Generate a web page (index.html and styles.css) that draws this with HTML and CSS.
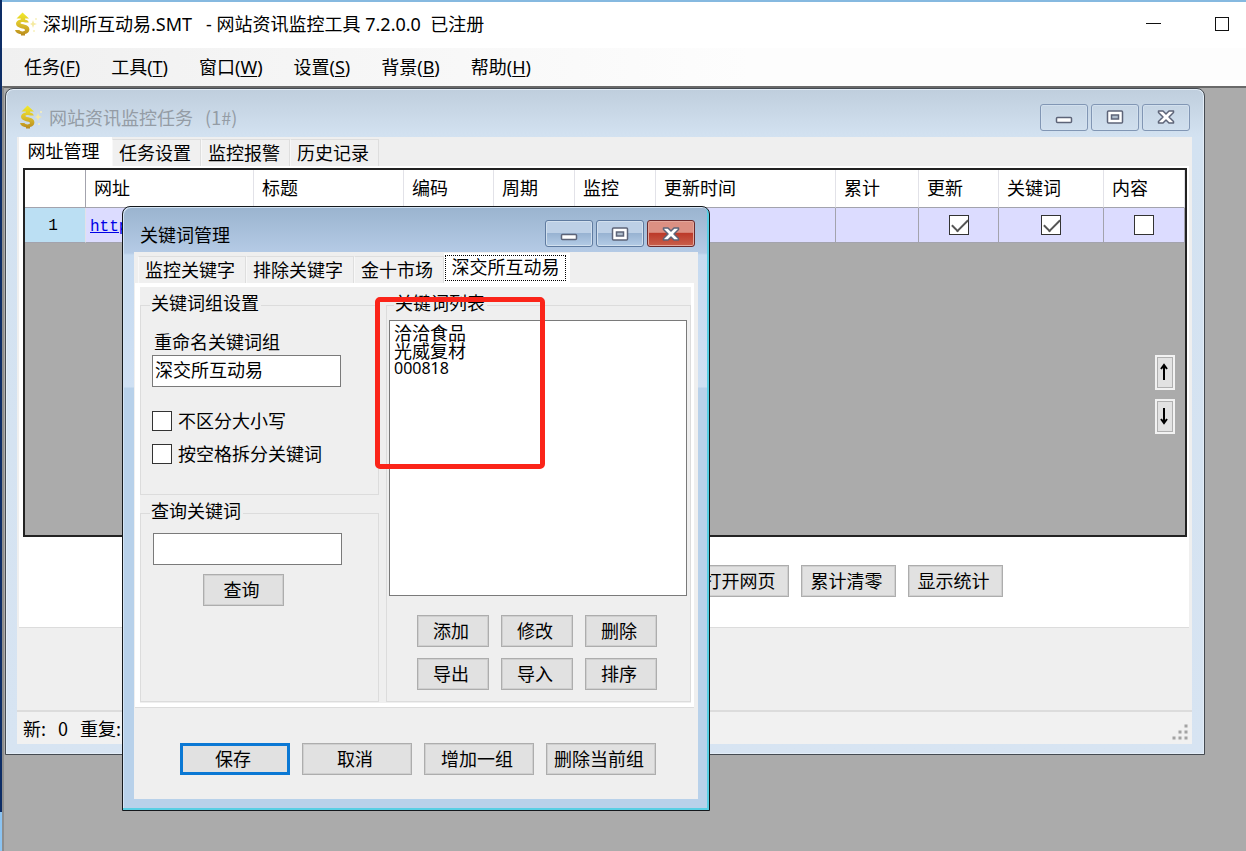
FILE: index.html
```html
<!DOCTYPE html>
<html lang="zh-CN">
<head>
<meta charset="utf-8">
<title>网站资讯监控工具</title>
<link rel="stylesheet" href="styles.css">
</head>
<body>
<svg class="defs" aria-hidden="true">
  <defs>
    <linearGradient id="gold" x1="0" y1="0" x2="0" y2="1">
      <stop offset="0" stop-color="#f2ea2a"/>
      <stop offset="0.5" stop-color="#dcc02c"/>
      <stop offset="1" stop-color="#b98a1c"/>
    </linearGradient>
    <symbol id="coin" viewBox="0 0 24 24">
      <path d="M8.500 .5 L15 6.500 H11 V7.500 C13 7.800 14.500 9 14.800 10.500 H10.800 C10 9.600 6.600 9.600 6.400 11 C6.400 12.600 15.400 12 15.400 17.200 C15.400 20 13.400 21.600 11 22 V23.500 H7 V22.200 C4 22 1.600 20.600 1 18 H5.400 C6 19.800 10.800 20 11 18 C11 16 2 16.600 2 11.800 C2 9.400 4 7.900 6.800 7.500 V6.500 H2.500 Z" fill="url(#gold)"/>
      <path d="M19 8 L20 11 L23 12 L20 13 L19 16 L18 13 L16 12 L18 11 Z" fill="#f5eaa0"/>
      <circle cx="22" cy="7" r="1" fill="#f7f0bd"/>
      <circle cx="20" cy="19" r="1" fill="#f7f0bd"/>
    </symbol>
    <symbol id="minimize" viewBox="0 0 18 14">
      <rect x="1.500" y="7.500" width="15" height="5" rx="1" fill="#fff" stroke="#5d6478" stroke-width="1.500"/>
    </symbol>
    <symbol id="maximize" viewBox="0 0 18 14">
      <rect x="1.500" y="1" width="15" height="12" rx="1" fill="#fff" stroke="#5d6478" stroke-width="1.500"/>
      <rect x="5.500" y="5" width="7" height="4" fill="#aebccb" stroke="#5d6478" stroke-width="1.500"/>
    </symbol>
    <symbol id="close" viewBox="0 0 18 14">
      <path d="M1.500 1 H6 L9 4 L12 1 H16.500 V2.500 L12 7 L16.500 11.500 V13 H12 L9 10 L6 13 H1.500 V11.500 L6 7 L1.500 2.500 Z" fill="#fff" stroke="#5d6478" stroke-width="1.500" stroke-linejoin="round"/>
    </symbol>
  </defs>
</svg>
<div class="app">
  <header class="titlebar">
    <svg class="app-icon"><use href="#coin"/></svg>
    <h1 class="app-title">深圳所互动易.SMT&nbsp;&nbsp; - 网站资讯监控工具 7.2.0.0&nbsp; 已注册</h1>
    <div class="system-buttons">
      <button type="button" aria-label="最小化"><svg viewBox="0 0 16 16"><path d="M0 7.500H15" stroke="#111"/></svg></button>
      <button type="button" aria-label="最大化"><svg viewBox="0 0 16 16"><rect x="1.500" y="1.500" width="13" height="13" fill="none" stroke="#111"/></svg></button>
    </div>
  </header>
  <nav class="menubar">
    <button type="button">任务(<u>F</u>)</button>
    <button type="button">工具(<u>T</u>)</button>
    <button type="button">窗口(<u>W</u>)</button>
    <button type="button">设置(<u>S</u>)</button>
    <button type="button">背景(<u>B</u>)</button>
    <button type="button">帮助(<u>H</u>)</button>
  </nav>
  <main class="workspace">
    <section class="window task-window">
      <header class="window-title">
        <svg class="app-icon"><use href="#coin"/></svg>
        <h2>网站资讯监控任务&nbsp;&nbsp; (1#)</h2>
        <div class="window-buttons">
          <button type="button" aria-label="最小化"><svg><use href="#minimize"/></svg></button>
          <button type="button" aria-label="最大化"><svg><use href="#maximize"/></svg></button>
          <button type="button" aria-label="关闭"><svg><use href="#close"/></svg></button>
        </div>
      </header>
      <div class="client">
        <div class="tabs" role="tablist">
          <button type="button" role="tab" class="tab active" aria-selected="true">网址管理</button>
          <button type="button" role="tab" class="tab">任务设置</button>
          <button type="button" role="tab" class="tab">监控报警</button>
          <button type="button" role="tab" class="tab">历史记录</button>
        </div>
        <div class="task-pane">
          <div class="grid-view">
            <table class="sites">
              <colgroup>
                <col class="c-index"><col class="c-url"><col class="c-title"><col class="c-code"><col class="c-short"><col class="c-short"><col class="c-time"><col class="c-total"><col class="c-update"><col class="c-keyword"><col class="c-content">
              </colgroup>
              <thead>
                <tr><th></th><th>网址</th><th>标题</th><th>编码</th><th>周期</th><th>监控</th><th>更新时间</th><th>累计</th><th>更新</th><th>关键词</th><th>内容</th></tr>
              </thead>
              <tbody>
                <tr>
                  <th class="row-index" scope="row">1</th>
                  <td><a href="#">http</a></td><td></td><td></td><td></td><td></td><td></td><td></td>
                  <td class="tick"><input type="checkbox" class="check" aria-label="更新" checked></td>
                  <td class="tick"><input type="checkbox" class="check" aria-label="关键词" checked></td>
                  <td class="tick"><input type="checkbox" class="check" aria-label="内容"></td>
                </tr>
              </tbody>
            </table>
            <div class="order-buttons">
              <button type="button" aria-label="上移"><svg viewBox="0 0 10 18"><path d="M5 17V3M2 6L5 2L8 6" fill="none" stroke="#000" stroke-width="2"/></svg></button>
              <button type="button" aria-label="下移"><svg viewBox="0 0 10 18"><path d="M5 1V15M2 12L5 16L8 12" fill="none" stroke="#000" stroke-width="2"/></svg></button>
            </div>
          </div>
          <div class="task-actions">
            <button type="button" class="btn">打开网页</button>
            <button type="button" class="btn">累计清零</button>
            <button type="button" class="btn">显示统计</button>
          </div>
        </div>
        <footer class="statusbar">
          <span>新:</span><span>0</span><span>重复:</span>
          <svg class="grip" viewBox="0 0 18 18"><path d="M12 0h4v4h-4zM6 6h4v4H6zM12 6h4v4h-4zM0 12h4v4H0zM6 12h4v4H6zM12 12h4v4h-4z" fill="#a3a3a3" stroke="#efefef"/></svg>
        </footer>
      </div>
    </section>

    <section class="window dialog" role="dialog" aria-labelledby="dialog-title">
      <header class="window-title">
        <h2 id="dialog-title">关键词管理</h2>
        <div class="window-buttons">
          <button type="button" aria-label="最小化"><svg><use href="#minimize"/></svg></button>
          <button type="button" aria-label="最大化"><svg><use href="#maximize"/></svg></button>
          <button type="button" class="danger" aria-label="关闭"><svg><use href="#close"/></svg></button>
        </div>
      </header>
      <div class="client">
        <div class="tabs" role="tablist">
          <button type="button" role="tab" class="tab">监控关键字</button>
          <button type="button" role="tab" class="tab">排除关键字</button>
          <button type="button" role="tab" class="tab">金十市场</button>
          <button type="button" role="tab" class="tab active focused" aria-selected="true"><span>深交所互动易</span></button>
        </div>
        <div class="keyword-pane">
          <div class="settings">
            <fieldset class="group rename">
              <legend>关键词组设置</legend>
              <label class="caption" for="group-name">重命名关键词组</label>
              <input class="field" id="group-name" type="text" value="深交所互动易">
              <label class="option"><input type="checkbox" class="check"><span>不区分大小写</span></label>
              <label class="option"><input type="checkbox" class="check"><span>按空格拆分关键词</span></label>
            </fieldset>
            <fieldset class="group search">
              <legend>查询关键词</legend>
              <input class="field" type="text" aria-label="查询关键词">
              <button type="button" class="btn">查询</button>
            </fieldset>
          </div>
          <fieldset class="group list-group">
            <legend>关键词列表</legend>
            <select class="keyword-list" size="3" aria-label="关键词列表">
              <option>洽洽食品</option>
              <option>光威复材</option>
              <option class="digits">000818</option>
            </select>
            <div class="list-actions">
              <button type="button" class="btn">添加</button>
              <button type="button" class="btn">修改</button>
              <button type="button" class="btn">删除</button>
              <button type="button" class="btn">导出</button>
              <button type="button" class="btn">导入</button>
              <button type="button" class="btn">排序</button>
            </div>
          </fieldset>
        </div>
        <div class="dialog-actions">
          <button type="button" class="btn primary">保存</button>
          <button type="button" class="btn">取消</button>
          <button type="button" class="btn">增加一组</button>
          <button type="button" class="btn">删除当前组</button>
        </div>
      </div>
      <div class="highlight"></div>
    </section>
  </main>
</div>
</body>
</html>
```
FILE: styles.css
```css
* {
  box-sizing: border-box;
}

body {
  margin: 0;
  background: linear-gradient(#0d2d66 0, #0d2d66 812px, #8cc4f2 812px);
  color: #000;
  font: 18px/22px "Noto Sans CJK SC", sans-serif;
}

button,
input,
select {
  margin: 0;
  padding: 0;
  color: inherit;
  font: inherit;
}

h1,
h2 {
  margin: 0;
  font: inherit;
}

.defs {
  position: absolute;
  width: 0;
  height: 0;
}

.app {
  display: flex;
  flex-direction: column;
  min-height: 100vh;
  border-top: 2px solid #86b9e0;
  margin-left: 2px;
}

.app-icon {
  flex: none;
  width: 24px;
  height: 24px;
}

.titlebar {
  display: flex;
  align-items: center;
  gap: 5px;
  height: 46px;
  padding: 0 16px 2px 12px;
  background: #fff;
}

.app-title {
  flex: 1;
  font-family: "Noto Sans", "Noto Sans CJK SC", sans-serif;
  white-space: pre;
}

.system-buttons {
  display: flex;
  gap: 52px;
}

.system-buttons button {
  display: flex;
  border: 0;
  background: none;
}

.system-buttons svg {
  width: 16px;
  height: 16px;
}

.menubar {
  display: flex;
  gap: 31px;
  height: 38px;
  padding-left: 22px;
  background: linear-gradient(90deg, #f0f0f0, #fdfdfd 60%);
}

.menubar button {
  border: 0;
  background: none;
  font-family: "Noto Sans", "Noto Sans CJK SC", sans-serif;
}

.menubar u {
  text-decoration-thickness: 1px;
  text-underline-offset: 2px;
}

.workspace {
  position: relative;
  flex: 1;
  min-height: 726px;
  border-top: 2px solid #696969;
  border-left: 2px solid #8e8e8e;
  background: #ababab;
}

.window {
  position: absolute;
  border-radius: 8px 8px 0 0;
}

.task-window {
  top: 0;
  right: 41px;
  left: 1px;
  padding: 0 12px 10px 11px;
  border: 1px solid #454b52;
  background: linear-gradient(#bfcedd, #d3e2f1 48px, #d7e4f2);
  box-shadow: inset 0 0 0 1px #e3edf7;
}

.window-title {
  display: flex;
  align-items: center;
}

.window-title h2 {
  flex: 1;
}

.task-window .window-title {
  gap: 6px;
  height: 48px;
  padding: 8px 2px 0 2px;
  color: #949ca5;
}

.window-buttons {
  display: flex;
  gap: 3px;
}

.window-buttons button {
  display: flex;
  align-items: center;
  justify-content: center;
  width: 48px;
  height: 27px;
  border: 1px solid #8196b4;
  border-radius: 3px;
  background: transparent;
  box-shadow: inset 0 0 0 1px #d2e0ee;
}

.window-buttons svg {
  width: 18px;
  height: 14px;
}

.client {
  background: #efefef;
}

.tabs {
  display: flex;
  align-items: flex-end;
}

.tab {
  height: 27px;
  padding: 0 4px 2px 0;
  border: 1px solid #dedede;
  border-bottom: 0;
  border-left-color: #f8f8f8;
  background: #f0f0f0;
  line-height: 22px;
}

.tab.active {
  border-color: #fff;
  background: #fff;
}

.task-window .tabs {
  height: 29px;
  padding-left: 2px;
}

.task-window .tab {
  width: 89px;
  padding-right: 3px;
}

.task-window .tab.active {
  width: 93px;
  height: 29px;
  padding: 0 4px 4px 0;
}

.task-pane {
  margin: 0 3px 0 2px;
  padding: 2px 2px 30px 4px;
  border-bottom: 1px solid #dcdcdc;
  background: #fff;
}

.grid-view {
  position: relative;
  min-height: 369px;
  border: 2px solid #222;
  background: #ababab;
}

.sites {
  width: 100%;
  border-spacing: 0;
  table-layout: fixed;
}

.c-index { width: 61px; }
.c-url { width: 168px; }
.c-title { width: 150px; }
.c-code { width: 90px; }
.c-short { width: 81px; }
.c-time { width: 180px; }
.c-total { width: 83px; }
.c-update { width: 80px; }
.c-keyword { width: 105px; }
.c-content { width: 81px; }

.sites th,
.sites td {
  padding: 0 0 4px 8px;
  border-right: 1px solid #e2e2e8;
  border-bottom: 1px solid #a3a3ad;
  font-weight: normal;
  text-align: left;
}

.sites thead th {
  height: 38px;
  background: #fff;
}

.sites thead th:first-child {
  border-right-color: #a3a3ad;
}

.sites td {
  height: 35px;
  padding: 0 0 2px 4px;
  border-right-color: #a3a3ad;
  background: #dcdcff;
}

.sites a {
  color: #0000e6;
  font: 16px/20px "Liberation Mono", monospace;
}

.sites .row-index {
  padding: 2px 4px 0 0;
  background: #bbdff3;
  font: 16px/20px "Liberation Mono", monospace;
  text-align: center;
}

.sites .tick {
  padding: 0;
  line-height: 0;
  text-align: center;
}

.check {
  flex: none;
  width: 20px;
  height: 20px;
  border: 1px solid #333;
  appearance: none;
  background: #fff;
}

.check:checked::before {
  display: block;
  width: 14px;
  height: 7px;
  margin: 3px 0 0 2px;
  border: solid #555;
  border-width: 0 0 2px 2px;
  content: "";
  transform: rotate(-45deg);
}

.order-buttons {
  position: absolute;
  top: 185px;
  right: 10px;
  display: grid;
  gap: 9px;
}

.order-buttons button {
  width: 20px;
  height: 35px;
  padding: 0 2px 0 0;
  border: 2px solid #f2f2f2;
  background: #e2e2e2;
  box-shadow: inset 0 0 0 1px #b0b0b0;
}

.order-buttons svg {
  width: 10px;
  height: 18px;
}

.btn {
  height: 32px;
  padding: 0 4px 2px 0;
  border: 1px solid #adadad;
  background: #e1e1e1;
  box-shadow: inset 0 0 0 1px #cfcfcf;
  line-height: 22px;
  white-space: nowrap;
}

.task-actions {
  display: flex;
  gap: 12px;
  padding: 28px 0 0 671px;
}

.task-actions .btn {
  width: 95px;
}

.statusbar {
  display: flex;
  align-items: center;
  gap: 12px;
  height: 34px;
  margin-top: 82px;
  padding: 0 2px 0 6px;
  border-top: 2px solid #dcdcdc;
  background: #f1f1f1;
}

.grip {
  align-self: flex-end;
  width: 18px;
  height: 18px;
  margin: 0 0 2px auto;
}

.dialog {
  top: 118px;
  left: 118px;
  width: 588px;
  padding: 0 11px;
  border: 1px solid #14181c;
  background: linear-gradient(#9ab4cf, #b5cbe6 46px, #c6daf0 48px, #cfe0f3 180px, #b8d1ea 181px);
  box-shadow: inset -2px -2px 0 #58cfe4, inset 1px 1px 0 #d4e4f4;
}

.dialog::after {
  display: block;
  height: 11px;
  content: "";
}

.dialog .window-title {
  height: 45px;
  padding: 8px 3px 0 6px;
}

.dialog .window-buttons button {
  border-color: #5f7ba0;
  background: linear-gradient(#bdd0e6 48%, #98b3d2 50%, #b4cce6);
}

.dialog .window-buttons .danger {
  border-color: #6b2a2c;
  background: linear-gradient(#dc9083 45%, #bc3a2a 50%, #c9604c);
  box-shadow: inset 0 0 0 1px #e3a79c;
}

.dialog .tabs {
  height: 31px;
  padding-left: 4px;
}

.dialog .tab {
  width: 108px;
}

.dialog .tab:nth-child(3) {
  width: 90px;
}

.dialog .tab.focused {
  width: 126px;
  height: 30px;
  padding: 0 3px 2px 0;
}

.focused span {
  display: block;
  height: 26px;
  border: 1px dotted #000;
  line-height: 21px;
}

.keyword-pane {
  display: grid;
  grid-template-columns: 239px 1fr;
  gap: 7px;
  margin: 0 4px 0 1px;
  padding: 8px 0 1px;
  border: solid #fff;
  border-width: 4px 3px 4px 5px;
  box-shadow: 0 1px 0 #dcdcdc;
}

.settings {
  display: flex;
  flex-direction: column;
  gap: 8px;
}

.group {
  display: flex;
  flex-direction: column;
  align-items: flex-start;
  min-width: 0;
  margin: 0;
  border: 1px solid #dcdcdc;
}

.group legend {
  margin-left: -2px;
  padding: 0 2px 5px 1px;
  line-height: 15px;
}

.rename {
  padding: 16px 11px 30px;
}

.caption {
  margin-left: 2px;
  padding-bottom: 4px;
  line-height: 20px;
}

.field {
  width: 189px;
  height: 32px;
  padding: 0 2px 5px;
  border: 1px solid #7a7a7a;
  background: #fff;
}

.option {
  display: flex;
  align-items: center;
  gap: 6px;
  height: 20px;
  margin-top: 13px;
}

.option span {
  padding-bottom: 3px;
}

.field + .option {
  margin-top: 24px;
}

.search {
  flex: 1;
  padding: 10px 12px 0;
}

.search .btn {
  width: 81px;
  margin: 9px 0 0 50px;
}

.search legend {
  margin-left: -3px;
}

.list-group {
  padding: 5px 3px 11px 2px;
}

.list-group legend {
  margin-left: 5px;
}

.keyword-list {
  align-self: stretch;
  height: 276px;
  padding: 2px;
  border: 1px solid #7a7a7a;
  border-radius: 0;
  background: #fff;
  overflow: hidden;
}

.keyword-list option {
  display: flex;
  align-items: center;
  height: 18px;
  min-height: 0;
  padding: 0 2px;
  overflow: visible;
}

.keyword-list .digits {
  font-family: "Noto Sans", sans-serif;
  font-size: 16px;
}

.list-actions {
  display: grid;
  grid-template-columns: repeat(3, 72px);
  gap: 11px 12px;
  margin: 19px 0 0 28px;
}

.dialog-actions {
  display: flex;
  gap: 12px;
  padding: 36px 0 24px 46px;
}

.dialog-actions .btn {
  width: 110px;
}

.btn.primary {
  border: 3px solid #0b78d4;
  box-shadow: none;
}

/* Red callout frame drawn over the keyword list */
.highlight {
  position: absolute;
  top: 90px;
  left: 252px;
  width: 170px;
  height: 172px;
  border: 5px solid #fb2419;
  border-radius: 5px;
  pointer-events: none;
}
```
